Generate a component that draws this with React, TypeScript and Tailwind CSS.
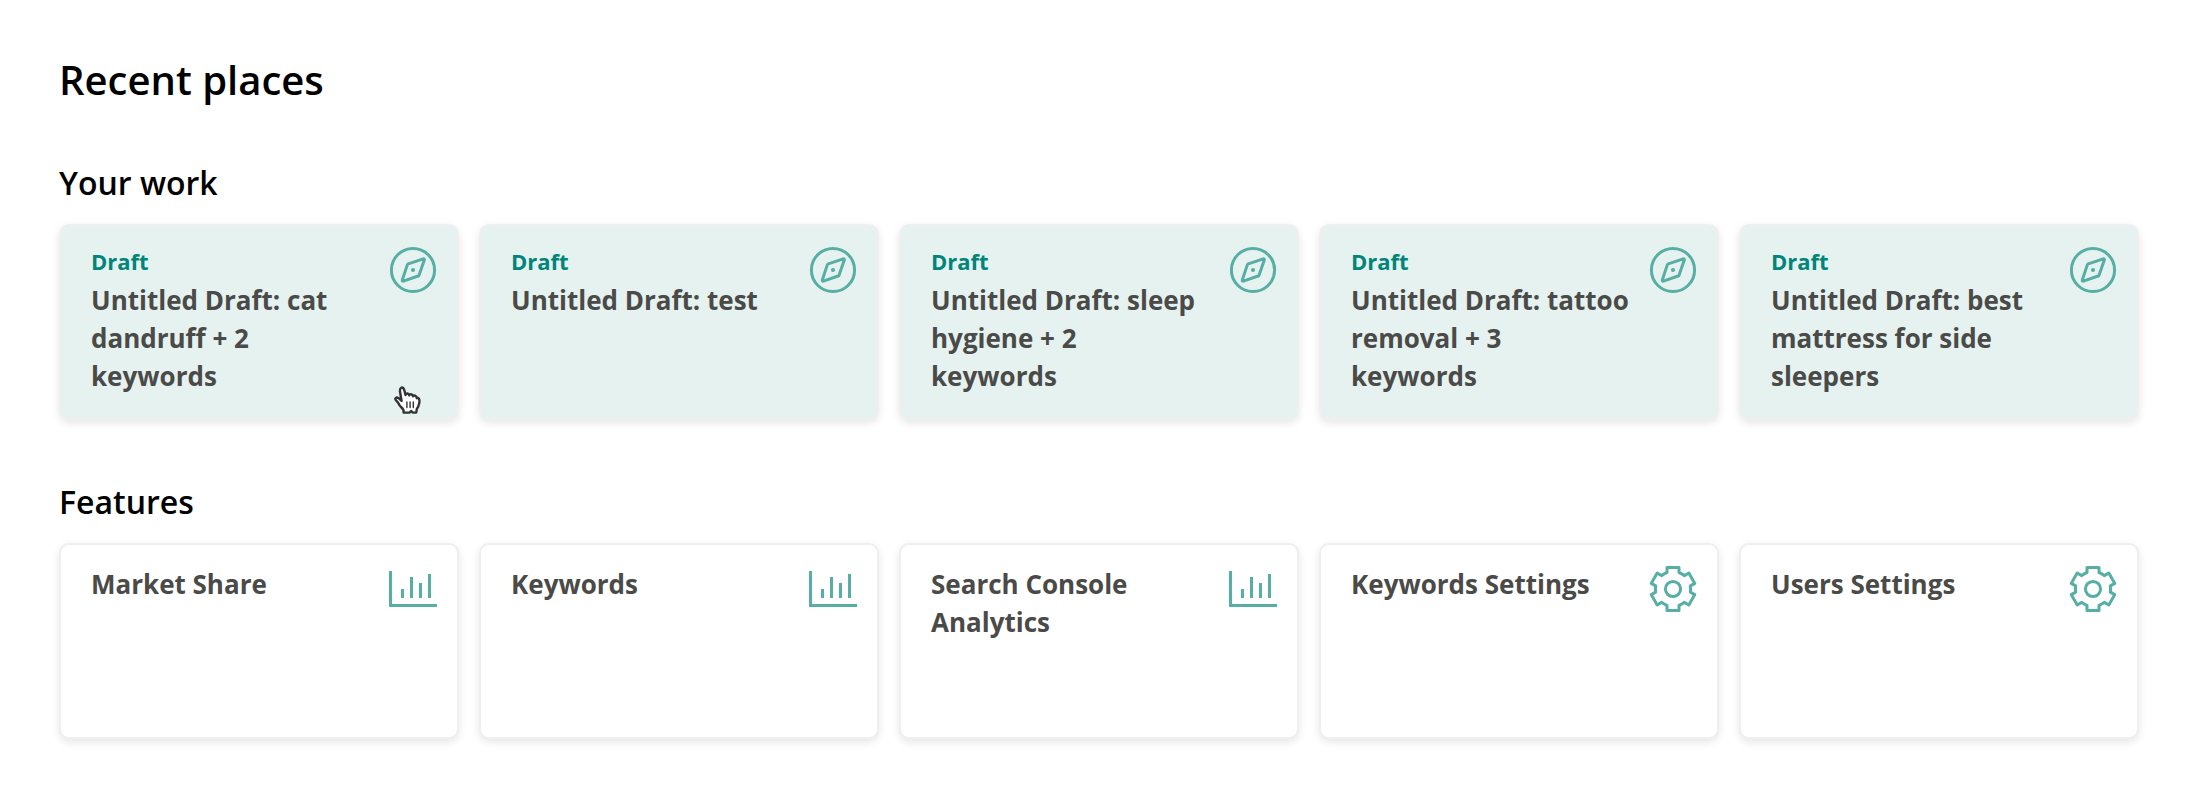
import type { ReactNode } from "react";

const drafts = [
  "Untitled Draft: cat dandruff + 2 keywords",
  "Untitled Draft: test",
  "Untitled Draft: sleep hygiene + 2 keywords",
  "Untitled Draft: tattoo removal + 3 keywords",
  "Untitled Draft: best mattress for side sleepers",
];

const features = [
  { title: "Market Share", icon: "chart" },
  { title: "Keywords", icon: "chart" },
  { title: "Search Console Analytics", icon: "chart" },
  { title: "Keywords Settings", icon: "gear" },
  { title: "Users Settings", icon: "gear" },
];

export default function App() {
  return (
    <main className="bg-white px-[59px] pt-[52px] pb-14 font-['Open_Sans',sans-serif] text-black">
      <h1 className="mb-[53px] text-[40px] leading-[56px] font-semibold">
        Recent places
      </h1>

      <Section title="Your work">
        {drafts.map((title, i) => (
          <PlaceCard
            key={title}
            title={title}
            label="Draft"
            icon={<CompassIcon />}
            className="bg-[#e6f2ef]"
          >
            {i === 0 && <HandCursor />}
          </PlaceCard>
        ))}
      </Section>

      <Section title="Features">
        {features.map((f) => (
          <PlaceCard
            key={f.title}
            title={f.title}
            icon={f.icon === "chart" ? <ChartIcon /> : <GearIcon />}
            className="bg-white"
          />
        ))}
      </Section>
    </main>
  );
}

function Section({ title, children }: { title: string; children: ReactNode }) {
  return (
    <section className="mb-[60px] last:mb-0">
      <h2 className="mb-[19px] text-[32px] leading-[44px] font-semibold">{title}</h2>
      <div className="grid grid-cols-5 gap-5">{children}</div>
    </section>
  );
}

type PlaceCardProps = {
  title: string;
  label?: string;
  icon: ReactNode;
  className: string;
  children?: ReactNode;
};

function PlaceCard({ title, label, icon, className, children }: PlaceCardProps) {
  return (
    <a
      href="#"
      className={`relative flex min-h-[196px] items-start gap-5 rounded-[10px] border-2 border-[#efefef] py-5 pr-5 pl-[30px] shadow-[0_3px_8px_rgba(0,0,0,0.1)] ${className}`}
    >
      <div className="flex min-w-0 flex-1 flex-col gap-[5px]">
        {label && (
          <span className="text-[22px] leading-[30px] font-bold text-[#00857a]">
            {label}
          </span>
        )}
        <span className="text-[26px] leading-[38px] font-bold text-[#4a4a48]">
          {title}
        </span>
      </div>
      <span className="shrink-0 text-[#57aea4]">{icon}</span>
      {children}
    </a>
  );
}

function CompassIcon() {
  return (
    <svg className="size-12" viewBox="0 0 48 48" fill="none" stroke="currentColor" strokeWidth="3" strokeLinejoin="round" aria-hidden="true">
      <circle cx="24" cy="24" r="21.6" />
      <path d="M34.2 12.9 19.3 17.9Q18.6 18.2 18.3 18.9L13.3 34Q13 35.4 14.4 35.1L29.2 30Q29.9 29.7 30.1 29L35.3 14Q35.6 12.5 34.2 12.9Z" />
      <circle cx="24" cy="24" r="2.1" fill="currentColor" stroke="none" />
    </svg>
  );
}

function ChartIcon() {
  return (
    <svg className="size-12" viewBox="0 0 48 48" fill="none" stroke="currentColor" strokeWidth="3" aria-hidden="true">
      <path d="M1.5 6V40.5H48M13.5 24V33M22.5 12V33M31.5 18V33M40.5 9V33" />
    </svg>
  );
}

function GearIcon() {
  return (
    <svg className="size-12" viewBox="0 0 48 48" fill="none" stroke="currentColor" strokeWidth="3" strokeLinejoin="round" aria-hidden="true">
      <path d="M18 2.4H30V7.5Q33 8.7 35.3 10.6L39.8 8 45.8 18.4 41.3 20.9Q41.9 24 41.3 27.1L45.8 29.6 39.8 40 35.3 37.4Q33 39.3 30 40.5V45.6H18V40.5Q15 39.3 12.7 37.4L8.2 40 2.2 29.6 6.7 27.1Q6.1 24 6.7 20.9L2.2 18.4 8.2 8 12.7 10.6Q15 8.7 18 7.5Z" />
      <circle cx="24" cy="24" r="7.6" />
    </svg>
  );
}

function HandCursor() {
  return (
    <svg
      className="absolute right-9 bottom-1 h-7 w-[27px]"
      viewBox="0 0 27 28"
      fill="white"
      stroke="#333"
      strokeWidth="2.4"
      strokeLinejoin="round"
      strokeLinecap="round"
      aria-hidden="true"
    >
      <path d="M9.6 26.6V24.4Q8.8 22.6 7 21Q5.4 19.4 4.3 17L1.6 13.8Q.9 12.3 2.4 11.6Q3.9 11.3 5.5 12.8L7.6 14.9 6.1 6.2Q5.5 2.3 7.5 1.5Q9.6 1.2 10.4 4.6L11.5 9Q11.9 7.4 13.3 7.5Q14.9 7.6 15.3 9.4Q15.8 8.2 17.1 8.3Q18.7 8.5 19 10.3Q19.7 9.2 21 9.6Q22.5 10.1 22.8 12.2Q24.1 11.6 25 12.8Q25.8 14.2 25.2 17.2Q24.8 20.4 22.9 22.8L22.2 26.6H18.6L17.3 25 15.5 26.6Z" />
      <path d="M12.9 16V21.6M16.1 16V21.6M19.3 16V21.6" strokeWidth="1.4" />
    </svg>
  );
}
